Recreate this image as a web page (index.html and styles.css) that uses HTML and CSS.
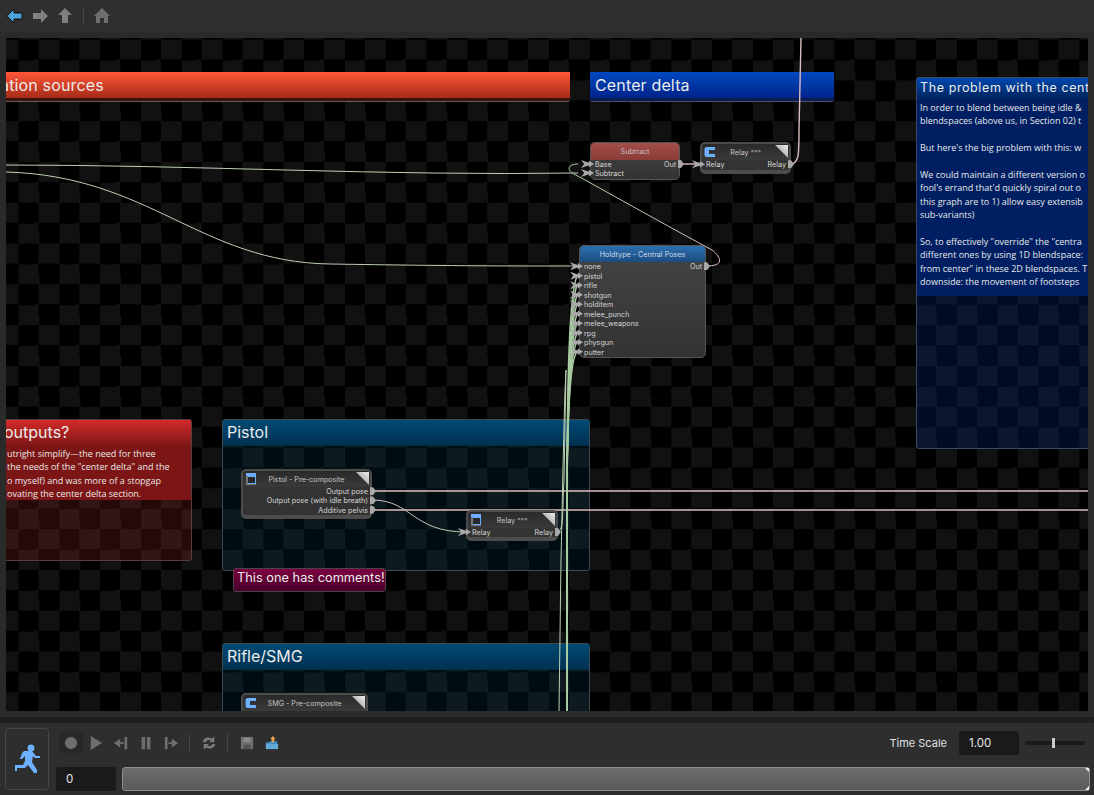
FILE: index.html
```html
<!DOCTYPE html>
<html lang="en">
<head>
    <meta charset="UTF-8">
    <title>Animgraph</title>
    <link rel="stylesheet" href="styles.css">
</head>
<body>
    <svg class="defs" width="0" height="0">
        <symbol id="icon-relay" viewBox="0 0 12 12">
            <path d="M2 1H11V4H5V8H11V11H2L0.500 9.500V2.500Z" fill="#6db0ff"/>
        </symbol>
        <symbol id="icon-window" viewBox="0 0 12 12">
            <path d="M1 3H3V11H11V12H1Z" fill="#777"/>
            <path d="M1 0H11V11H3V3H1Z" fill="#6db0ff"/>
            <path d="M3 4H10V10H3Z" fill="#26282c"/>
        </symbol>
    </svg>

    <div class="toolbar">
        <svg class="tool" viewBox="0 0 18 18"><path d="M1 9L8 2V6H16V12H8V16Z" fill="#4ba3dc" stroke="#111" stroke-width="1"/></svg>
        <svg class="tool" viewBox="0 0 18 18"><path d="M17 9L10 2V6H2V12H10V16Z" fill="#7f7f7f"/></svg>
        <svg class="tool" viewBox="0 0 18 18"><path d="M9 1L16 8H12V16H6V8H2Z" fill="#7f7f7f"/></svg>
        <span class="tool-sep"></span>
        <svg class="tool" viewBox="0 0 18 18"><path d="M9 1L17 9H15V16H11V11H7V16H3V9H1Z" fill="#6f6f6f"/></svg>
    </div>

    <div class="canvas">
        <div class="comment comment-orange">
            <div class="comment-title">ation sources</div>
        </div>
        <div class="comment comment-blue">
            <div class="comment-title">Center delta</div>
        </div>

        <div class="comment comment-problem">
            <div class="comment-title">The problem with the cent</div>
            <div class="comment-text">
                <p>In order to blend between being idle &amp;<br>blendspaces (above us, in Section 02) t</p>
                <p>But here's the big problem with this: w</p>
                <p>We could maintain a different version o<br>fool's errand that'd quickly spiral out o<br>this graph are to 1) allow easy extensib<br>sub-variants)</p>
                <p>So, to effectively "override" the "centra<br>different ones by using 1D blendspace:<br>from center" in these 2D blendspaces. T<br>downside: the movement of footsteps</p>
            </div>
        </div>

        <div class="comment comment-red">
            <div class="comment-title">outputs?</div>
            <div class="comment-text">
                <p>utright simplify—the need for three<br>the needs of the "center delta" and the<br>o myself) and was more of a stopgap<br>ovating the center delta section.</p>
            </div>
        </div>

        <div class="comment comment-group comment-pistol">
            <div class="comment-title">Pistol</div>
        </div>
        <div class="comment comment-group comment-rifle">
            <div class="comment-title">Rifle/SMG</div>
        </div>
        <div class="comment comment-pink">
            <div class="comment-title">This one has comments!</div>
        </div>

        <svg class="wires" viewBox="6 38 1082 673">
            <defs>
                <linearGradient id="pink-green" gradientUnits="userSpaceOnUse" x1="372" y1="0" x2="466" y2="0">
                    <stop offset="0" stop-color="#dcbcbc"/>
                    <stop offset="1" stop-color="#a8cca2"/>
                </linearGradient>
                <linearGradient id="green-pink" gradientUnits="userSpaceOnUse" x1="570" y1="0" x2="720" y2="0">
                    <stop offset="0" stop-color="#a8cca2"/>
                    <stop offset="1" stop-color="#dcbcbc"/>
                </linearGradient>
            </defs>
            <g class="wire-pink">
                <path d="M790 164C799 164 799 155 799 130L801 38"/>
                <path d="M680 164H700"/>
                <path d="M372 491H1088"/>
                <path d="M372 510H1088"/>
            </g>
            <g class="wire-green">
                <path d="M6 165C200 165 380 176 578 173"/>
                <path d="M6 172C150 176 200 262 330 264S500 266 578 266"/>
                <path d="M578 164C568 164 566 170 574 174C600 188 660 222 712 250C722 258 724 266 706 266" stroke="url(#green-pink)"/>
                <path d="M372 500C412 500 412 532 466 532" stroke="url(#pink-green)"/>
                <path d="M559 711L561 560C562 520 564 400 566 370"/>
                <path d="M556 532C564 532 562 520 564 480L566 370"/>
            </g>
            <g class="wire-bundle">
                <path d="M567 711V520C567 430 567 300 577 276"/>
                <path d="M567 711V520C567 430 568 310 577 285"/>
                <path d="M567 711V520C567 430 568 320 577 295"/>
                <path d="M567 711V520C567 430 568 330 577 304"/>
                <path d="M567 711V520C567 430 568 340 577 314"/>
                <path d="M567 711V520C567 430 568 345 577 323"/>
                <path d="M567 711V520C567 430 569 350 577 333"/>
                <path d="M567 711V520C567 430 569 355 577 342"/>
                <path d="M567 711V520C567 430 569 360 577 352"/>
            </g>
        </svg>

        <div class="node node-subtract">
            <div class="node-head head-red">Subtract</div>
            <div class="port-row"><span class="port-in">Base</span><span class="port-out">Out</span></div>
            <div class="port-row"><span class="port-in">Subtract</span></div>
        </div>

        <div class="node node-dark node-relay-top">
            <div class="node-head">
                <svg class="node-icon"><use href="#icon-relay"/></svg>Relay ^^^<i class="node-corner"></i>
            </div>
            <div class="port-row"><span class="port-in">Relay</span><span class="port-out">Relay</span></div>
        </div>

        <div class="node node-holdtype">
            <div class="node-head head-blue">Holdtype - Central Poses</div>
            <div class="port-row"><span class="port-in">none</span><span class="port-out">Out</span></div>
            <div class="port-row"><span class="port-in">pistol</span></div>
            <div class="port-row"><span class="port-in">rifle</span></div>
            <div class="port-row"><span class="port-in">shotgun</span></div>
            <div class="port-row"><span class="port-in">holditem</span></div>
            <div class="port-row"><span class="port-in">melee_punch</span></div>
            <div class="port-row"><span class="port-in">melee_weapons</span></div>
            <div class="port-row"><span class="port-in">rpg</span></div>
            <div class="port-row"><span class="port-in">physgun</span></div>
            <div class="port-row"><span class="port-in">putter</span></div>
        </div>

        <div class="node node-dark node-pistol">
            <div class="node-head">
                <svg class="node-icon"><use href="#icon-window"/></svg>Pistol - Pre-composite<i class="node-corner"></i>
            </div>
            <div class="port-row port-row-end"><span class="port-out">Output pose</span></div>
            <div class="port-row port-row-end"><span class="port-out">Output pose (with idle breath)</span></div>
            <div class="port-row port-row-end"><span class="port-out">Additive pelvis</span></div>
        </div>

        <div class="node node-dark node-relay-low">
            <div class="node-head">
                <svg class="node-icon"><use href="#icon-window"/></svg>Relay ^^^<i class="node-corner"></i>
            </div>
            <div class="port-row"><span class="port-in">Relay</span><span class="port-out">Relay</span></div>
        </div>

        <div class="node node-dark node-smg">
            <div class="node-head">
                <svg class="node-icon"><use href="#icon-relay"/></svg>SMG - Pre-composite<i class="node-corner"></i>
            </div>
        </div>
    </div>

    <div class="divider"></div>

    <div class="player">
        <div class="player-anim">
            <svg class="run-icon" viewBox="0 0 26 30">
                <circle cx="17" cy="4" r="3.500" fill="#6db0ff"/>
                <path d="M8 9L10 7H18L22 12H26V14H21L19 12L18 18L23 26V29H20L14 21L11 24H3V27H1V21H9L11 17V12L8 15H6Z" fill="#6db0ff"/>
            </svg>
        </div>
        <div class="player-main">
            <div class="player-controls">
                <span class="btn btn-active"><svg viewBox="0 0 16 16"><circle cx="8" cy="8" r="7" fill="#6e6e6e"/></svg></span>
                <span class="btn"><svg viewBox="0 0 16 16"><path d="M2 0L15 8L2 16Z" fill="#6e6e6e"/></svg></span>
                <span class="btn"><svg viewBox="0 0 16 16"><path d="M0 8L7 3V7H11V9H7V13ZM12 1H15V15H12Z" fill="#6e6e6e"/></svg></span>
                <span class="btn"><svg viewBox="0 0 16 16"><path d="M3 1H7V15H3ZM9 1H13V15H9Z" fill="#6e6e6e"/></svg></span>
                <span class="btn"><svg viewBox="0 0 16 16"><path d="M1 1H4V15H1ZM5 7H9V3L16 8L9 13V9H5Z" fill="#6e6e6e"/></svg></span>
                <span class="ctrl-sep"></span>
                <span class="btn"><svg viewBox="0 0 16 16"><path d="M1 7C1 3 7 0 11 3L14 0.500V7H8L10 5C8 4 5 4.500 4 7ZM15 9C15 13 9 16 5 13L2 15.500V9H8L6 11C8 12 11 11.500 12 9Z" fill="#7a7a7a"/></svg></span>
                <span class="ctrl-sep"></span>
                <span class="btn"><svg viewBox="0 0 16 16"><path d="M1 1H15V15H1Z" fill="#6e6e6e"/><path d="M4 2H12V7H4Z" fill="#8a8a8a"/><path d="M4 10H12V15H4Z" fill="#555"/></svg></span>
                <span class="btn"><svg viewBox="0 0 16 16"><path d="M1 7H5L6 6H14V14H1Z" fill="#3f8cc4"/><path d="M1 9H15V15H1Z" fill="#5fa8d8"/><path d="M9 0L12 3.500H10.500V7H7.500V3.500H6Z" fill="#e8a050"/></svg></span>
                <span class="time-scale">
                    <span class="time-label">Time Scale</span>
                    <span class="time-input">1.00</span>
                    <span class="slider"><i class="slider-thumb"></i></span>
                </span>
            </div>
            <div class="player-timeline">
                <span class="frame-input">0</span>
                <div class="timeline"></div>
            </div>
        </div>
    </div>
</body>
</html>
```

FILE: styles.css
```css
html, body {
    margin: 0;
    height: 100%;
}

body {
    display: flex;
    flex-direction: column;
    height: 795px;
    overflow: hidden;

    background-color: #2a2a2a;

    font-family: Inter, "Liberation Sans", sans-serif;
}

.defs {
    position: absolute;
}

.toolbar {
    display: flex;
    align-items: center;
    flex-shrink: 0;
    height: 32px;
    padding-left: 6px;
    gap: 7px;

    background-color: #2f2f2f;
}

.tool {
    width: 18px;
    height: 18px;
}

.tool-sep {
    width: 1px;
    height: 16px;
    margin: 0 2px 0 2px;

    background-color: #484848;
}

.canvas {
    position: relative;
    flex-shrink: 0;
    width: 1082px;
    height: 673px;
    margin: 6px 6px 0;
    overflow: hidden;

    background-color: #000;
    background-image: repeating-conic-gradient(#111 0 25%, #000 0 50%);
    background-position: 12.6px 1.6px;
    background-size: 40.8px 40.8px;
}

.wires {
    position: absolute;
    left: 0;
    top: 0;
    width: 1082px;
    height: 673px;
    fill: none;
}

.wire-pink {
    stroke: #dcbcbc;
    stroke-width: 1.4;
}

.wire-green {
    stroke: #bcd0b4;
    stroke-width: 1;
}

.wire-bundle {
    stroke: #a8cca2;
    stroke-width: 1.4;
}

/* comment boxes */

.comment {
    position: absolute;
    display: flex;
    flex-direction: column;
    box-sizing: border-box;

    border-radius: 3px;
}

.comment-title {
    color: #ececec;
    font-size: 16px;
    white-space: nowrap;
}

.comment-text {
    padding: 2px 3px;

    color: #e8e8e8;
    font-family: "Open Sans", sans-serif;
    font-size: 9px;
    line-height: 13.4px;
    white-space: nowrap;
}

.comment-text p {
    margin: 0 0 13.4px;
}

.comment-text p:last-child {
    margin-bottom: 0;
}

.comment-orange {
    left: -10px;
    top: 34px;
    width: 574px;
    height: 30px;

    border-bottom: 1px solid #6a5c58;
    background-color: #3a140c;
}

.comment-orange .comment-title {
    height: 26px;
    padding-left: 4px;
    background: linear-gradient(#ff5638, #a62c18);

    letter-spacing: 0.15px;
    line-height: 26px;
}

.comment-blue {
    left: 584px;
    top: 34px;
    width: 244px;
    height: 30px;

    border-bottom: 1px solid #4a5068;
    background-color: #0c1c50;
}

.comment-blue .comment-title {
    height: 26px;
    padding-left: 5px;
    background: linear-gradient(#0048c0, #00248a);

    letter-spacing: 0.15px;
    line-height: 26px;
}

.comment-problem {
    left: 910px;
    top: 39px;
    width: 200px;
    height: 372px;

    border: 1px solid #3a4a66;
    background-color: rgba(0, 40, 120, 0.3);
}

.comment-problem .comment-title {
    height: 21px;
    padding-left: 3px;
    background: linear-gradient(#0048b0, #00245c);

    font-size: 12.5px;
    letter-spacing: 0.6px;
    line-height: 20px;
}

.comment-problem .comment-text {
    height: 193px;
    background-color: #001f63;
}

.comment-red {
    left: -10px;
    top: 381px;
    width: 196px;
    height: 142px;

    border: 1px solid #55403f;
    background-color: rgba(170, 40, 40, 0.22);
}

.comment-red .comment-title {
    height: 25px;
    padding-left: 7px;
    background: linear-gradient(#d42a2a, #801818);

    line-height: 25px;
}

.comment-red .comment-text {
    height: 51px;
    padding-left: 10px;
    background-color: #7c1616;
}

.comment-group {
    left: 216px;
    width: 368px;

    border: 1px solid #3c4a52;
    background-color: rgba(0, 70, 110, 0.16);
}

.comment-group .comment-title {
    height: 26px;
    padding-left: 4px;
    background: linear-gradient(#004a74, #003050);

    line-height: 25px;
}

.comment-pistol {
    top: 381px;
    height: 152px;
}

.comment-rifle {
    top: 605px;
    height: 90px;
}

.comment-pink {
    left: 227px;
    top: 530px;
    width: 153px;
    height: 24px;

    border: 1px solid #50404a;
    background: linear-gradient(#7c0040, #48002a);
}

.comment-pink .comment-title {
    padding-left: 3px;

    font-size: 12.8px;
    line-height: 17px;
}

/* graph nodes */

.node {
    position: absolute;
    display: flex;
    flex-direction: column;
    box-sizing: border-box;

    border: 1px solid #555;
    border-radius: 5px;
    background: linear-gradient(#444, #333);

    color: #d6d6d6;
    font-size: 7.2px;
}

.node-head {
    position: relative;
    display: flex;
    align-items: center;
    justify-content: center;
    flex-shrink: 0;
    height: 17px;
    border-radius: 4px 4px 0 0;

    color: #c4c4c4;
}

.head-red {
    background: linear-gradient(#a24e4a, #8c3c38);
}

.head-blue {
    height: 16px;
    background: linear-gradient(#2c70b0, #1c4c80);
    color: #cfd8e4;
}

.node-dark {
    border: 2px solid #4c4c4c;
    border-bottom-width: 4px;
    background-color: #333;
    background-image: none;
}

.node-dark .node-head {
    height: 16px;
    background: linear-gradient(#2a2a2a, #3a3a3a);
}

.node-icon {
    position: absolute;
    left: 2px;
    top: 2px;
    width: 12px;
    height: 12px;
}

.node-corner {
    position: absolute;
    right: 1px;
    top: 1px;
    width: 13px;
    height: 13px;
    clip-path: polygon(0 0, 100% 0, 100% 100%);

    background: linear-gradient(45deg, #888, #eee);
}

.port-row {
    display: flex;
    align-items: center;
    justify-content: space-between;
    height: 9.6px;
    padding: 0 3px 0 4px;
    white-space: nowrap;
}

.port-row-end {
    justify-content: flex-end;
}

.port-in,
.port-out {
    position: relative;
}

.port-in::before {
    content: '';
    position: absolute;
    left: -14px;
    top: 0;
    width: 13px;
    height: 8px;
    clip-path: polygon(0 0, 60% 35%, 60% 10%, 100% 50%, 60% 90%, 60% 65%, 0 100%, 25% 50%);

    background-color: #aaa;
}

.port-out::after {
    content: '';
    position: absolute;
    right: -8px;
    top: 0;
    width: 6px;
    height: 8px;
    clip-path: polygon(0 0, 50% 0, 100% 50%, 50% 100%, 0 100%);

    background-color: #a8a8a8;
}

.node-subtract {
    left: 584px;
    top: 104px;
    width: 90px;
    height: 38px;
}

.node-subtract .port-row {
    height: 9px;
}

.node-relay-top {
    left: 694px;
    top: 104px;
    width: 91px;
    height: 32px;
}

.node-holdtype {
    left: 573px;
    top: 207px;
    width: 127px;
    height: 113px;
}

.node-pistol {
    left: 235px;
    top: 431px;
    width: 131px;
    height: 50px;
}

.node-pistol .port-row {
    padding-right: 2px;
}

.node-relay-low {
    left: 460px;
    top: 472px;
    width: 92px;
    height: 31px;
}

.node-smg {
    left: 235px;
    top: 655px;
    width: 127px;
    height: 40px;
}

/* bottom panel */

.divider {
    flex-shrink: 0;
    height: 6px;
    margin-top: 6px;

    background-color: #1f1f1f;
}

.player {
    display: flex;
    flex: 1;
    padding: 5px 4px 4px 5px;
    gap: 7px;

    border-radius: 5px 5px 0 0;
    background-color: #2e2e2e;
}

.player-anim {
    display: flex;
    align-items: center;
    justify-content: center;
    box-sizing: border-box;
    width: 44px;
    height: 62px;

    border: 1px solid #454545;
    border-radius: 4px;
}

.run-icon {
    width: 26px;
    height: 30px;
}

.player-main {
    display: flex;
    flex: 1;
    flex-direction: column;
    justify-content: space-between;
}

.player-controls {
    display: flex;
    align-items: center;
    height: 30px;
    margin-left: 3px;
    gap: 1px;
}

.btn {
    display: flex;
    align-items: center;
    justify-content: center;
    width: 24px;
    height: 20px;

    border-radius: 3px;
}

.btn svg {
    width: 14px;
    height: 14px;
}

.btn-active {
    background-color: #282828;
}

.ctrl-sep {
    width: 1px;
    height: 18px;
    margin: 0 6px 0 5px;

    background-color: #444;
}

.time-scale {
    display: flex;
    align-items: center;
    margin-left: auto;
    margin-right: 5px;
}

.time-label {
    margin-right: 12px;

    color: #e0e0e0;
    font-size: 11px;
}

.time-input {
    box-sizing: border-box;
    width: 60px;
    height: 24px;
    padding-left: 10px;

    border-radius: 3px;
    background-color: #1a1a1a;

    color: #e8e8e8;
    font-size: 11.5px;
    line-height: 24px;
}

.slider {
    position: relative;
    width: 60px;
    height: 4px;
    margin: 0 0 0 6px;

    border-radius: 2px;
    background-color: #1a1a1a;
}

.slider-thumb {
    position: absolute;
    left: 27px;
    top: -3px;
    width: 3px;
    height: 10px;

    background-color: #c8c8c8;
}

.player-timeline {
    display: flex;
    gap: 6px;
    height: 24px;
}

.frame-input {
    box-sizing: border-box;
    flex-shrink: 0;
    width: 60px;
    padding-left: 10px;

    border-radius: 3px;
    background-color: #1a1a1a;

    color: #e8e8e8;
    font-size: 11.5px;
    line-height: 24px;
}

.timeline {
    position: relative;
    flex: 1;
    box-sizing: border-box;

    border: 1px solid #8c8c8c;
    border-radius: 3px;
    background: linear-gradient(#6c6c6c, #5a5a5a);
}

.timeline::before,
.timeline::after {
    content: '';
    position: absolute;
    right: 0;
    width: 4px;
    height: 4px;

    background-color: #eee;
}

.timeline::before {
    top: 0;
    clip-path: polygon(0 0, 100% 0, 100% 100%);
}

.timeline::after {
    bottom: 0;
    clip-path: polygon(100% 0, 100% 100%, 0 100%);
}
```
